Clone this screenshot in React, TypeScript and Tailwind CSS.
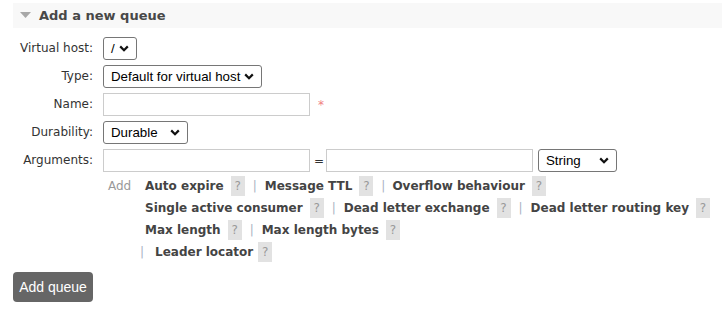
import React from "react";

function Chevron() {
  return (
    <svg width="10" height="7" viewBox="0 0 10 7" className="shrink-0">
      <path d="M1.2 1.4 L5 5.2 L8.8 1.4" fill="none" stroke="#111" strokeWidth="2.2" />
    </svg>
  );
}

function FakeSelect({ value, width }: { value: string; width: string }) {
  return (
    <div
      className={`flex h-[23px] items-center justify-between rounded-[3px] border border-[#767676] bg-white pl-[7px] pr-[7px] text-[13.3px] text-black ${width}`}
      style={{ fontFamily: '"Liberation Sans", Arial, sans-serif' }}
    >
      <span className="whitespace-nowrap">{value}</span>
      <Chevron />
    </div>
  );
}

function TextBox({ width }: { width: string }) {
  return <div className={`h-[23px] shrink-0 border border-[#cccccc] bg-white ${width}`} />;
}

function Help() {
  return (
    <span className="mx-[7px] inline-flex h-[20px] w-[14px] shrink-0 items-center justify-center bg-[#e2e2e2] text-[12px] font-normal text-[#999]">
      ?
    </span>
  );
}

function Sep() {
  return <span className="mx-[1px] font-normal text-[#a9b3c2]">|</span>;
}

function Link({ children }: { children: React.ReactNode }) {
  return <span className="whitespace-nowrap font-bold text-[#444]">{children}</span>;
}

export default function App() {
  const labels = "whitespace-nowrap text-right text-[12px] text-[#333] leading-[23px]";
  return (
    <div className="min-h-[310px] bg-white pt-[3px]" style={{ fontFamily: '"DejaVu Sans", Verdana, sans-serif' }}>
      <div className="ml-[13px] flex h-[25px] items-center bg-[#f8f8f8] pl-[7px]">
        <svg width="11" height="7" viewBox="0 0 11 7">
          <path d="M0 0 H11 L5.5 6 Z" fill="#a8a8a8" />
        </svg>
        <span className="ml-[8px] text-[13px] font-bold text-[#484848]">Add a new queue</span>
      </div>

      <div className="ml-[13px] mt-[9px] grid grid-cols-[80px_auto] gap-x-[10px] gap-y-[5px]">
        <div className={labels}>Virtual host:</div>
        <div className="flex">
          <FakeSelect value="/" width="w-[34px]" />
        </div>

        <div className={labels}>Type:</div>
        <div className="flex">
          <FakeSelect value="Default for virtual host" width="w-[159px]" />
        </div>

        <div className={labels}>Name:</div>
        <div className="flex items-center">
          <TextBox width="w-[207px]" />
          <span className="ml-[8px] text-[12px] text-[#f08080]">*</span>
        </div>

        <div className={labels}>Durability:</div>
        <div className="flex">
          <FakeSelect value="Durable" width="w-[85px]" />
        </div>

        <div className={labels}>Arguments:</div>
        <div className="flex items-center">
          <TextBox width="w-[207px]" />
          <span className="mx-[4px] w-[8px] text-center text-[12px] text-[#333]">=</span>
          <TextBox width="w-[207px]" />
          <div className="ml-[5px] flex">
            <FakeSelect value="String" width="w-[79px]" />
          </div>
        </div>
      </div>

      <div className="ml-[108px] mt-[3px] flex text-[12px] leading-[22px]">
        <span className="w-[37px] shrink-0 text-[#999]">Add</span>
        <div className="flex flex-col whitespace-nowrap">
          <div className="flex items-center">
            <Link>Auto expire</Link>
            <Help />
            <Sep />
            <span className="w-[7px]" />
            <Link>Message TTL</Link>
            <Help />
            <Sep />
            <span className="w-[6px]" />
            <Link>Overflow behaviour</Link>
            <Help />
          </div>
          <div className="flex items-center">
            <Link>Single active consumer</Link>
            <Help />
            <Sep />
            <span className="w-[7px]" />
            <Link>Dead letter exchange</Link>
            <Help />
            <Sep />
            <span className="w-[7px]" />
            <Link>Dead letter routing key</Link>
            <Help />
          </div>
          <div className="flex items-center">
            <Link>Max length</Link>
            <Help />
            <Sep />
            <span className="w-[7px]" />
            <Link>Max length bytes</Link>
            <Help />
          </div>
          <div className="-ml-[6px] flex items-center">
            <Sep />
            <span className="w-[10px]" />
            <Link>Leader locator</Link>
            <span className="-ml-[2px]">
              <Help />
            </span>
          </div>
        </div>
      </div>

      <button
        className="ml-[13px] mt-[9px] h-[30px] w-[80px] rounded-[4px] bg-[#666] text-[14px] text-white"
        style={{ fontFamily: '"Liberation Sans", Arial, sans-serif' }}
      >
        Add queue
      </button>
    </div>
  );
}
